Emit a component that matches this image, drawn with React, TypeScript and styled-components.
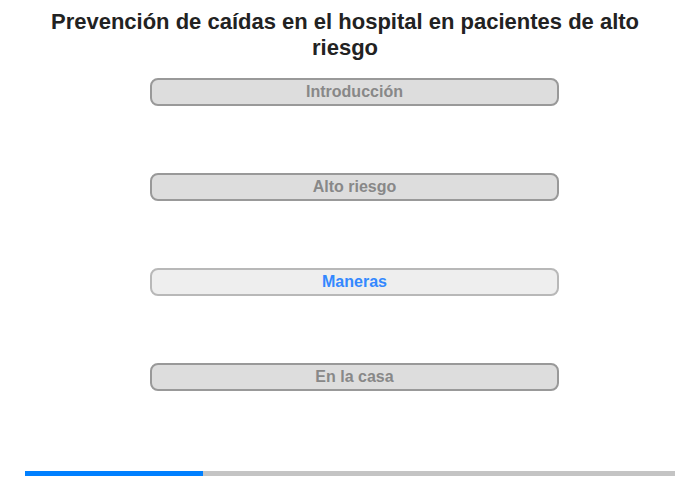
import React from "react";
import styled, { createGlobalStyle } from "styled-components";

const GlobalStyle = createGlobalStyle`
  html, body {
    margin: 0;
    padding: 0;
    background: #ffffff;
  }
  body {
    font-family: "Liberation Sans", Arial, sans-serif;
  }
`;

const Page = styled.div`
  width: 700px;
  height: 480px;
  display: flex;
  flex-direction: column;
  box-sizing: border-box;
  padding-top: 9px;
`;

const Title = styled.h1`
  margin: 0 0 0 20px;
  width: 650px;
  font-size: 22px;
  line-height: 26px;
  font-weight: bold;
  color: #222222;
  text-align: center;
`;

const Menu = styled.nav`
  display: flex;
  flex-direction: column;
  align-items: center;
  gap: 67px;
  margin-top: 17px;
  padding-left: 9px;
`;

const MenuButton = styled.button<{ active?: boolean }>`
  width: 409px;
  height: 28px;
  box-sizing: border-box;
  border: 2px solid ${({ active }) => (active ? "#b8b8b8" : "#999999")};
  border-radius: 8px;
  background: ${({ active }) => (active ? "#eeeeee" : "#dddddd")};
  color: ${({ active }) => (active ? "#3388ff" : "#888888")};
  font-family: "Liberation Sans", Arial, sans-serif;
  font-size: 16px;
  font-weight: bold;
  padding: 0;
  cursor: pointer;
`;

const Progress = styled.div`
  margin: auto auto 4px;
  width: 650px;
  height: 5px;
  background: #c4c4c4;
`;

const ProgressFill = styled.div`
  height: 100%;
  background: #0080ff;
`;

const sections = ["Introducción", "Alto riesgo", "Maneras", "En la casa"];

export default function App() {
  const current = 2;
  const progress = 178 / 650;

  return (
    <>
      <GlobalStyle />
      <Page>
        <Title>Prevención de caídas en el hospital en pacientes de alto riesgo</Title>
        <Menu>
          {sections.map((s, i) => (
            <MenuButton key={s} active={i === current}>
              {s}
            </MenuButton>
          ))}
        </Menu>
        <Progress>
          <ProgressFill style={{ width: `${progress * 100}%` }} />
        </Progress>
      </Page>
    </>
  );
}
